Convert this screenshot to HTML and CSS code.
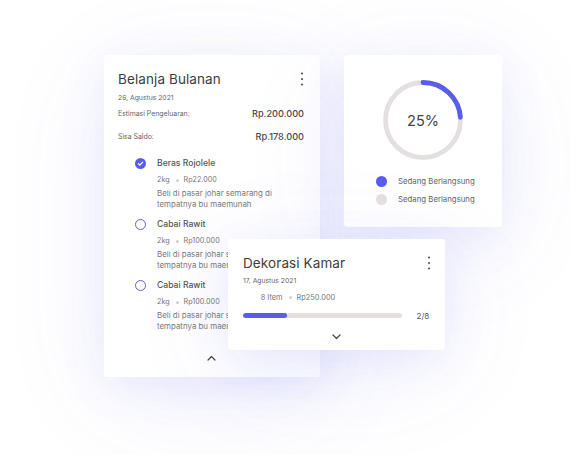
FILE: index.html
```html
<!DOCTYPE html>
<html lang="id">
<head>
<meta charset="utf-8">
<title>Belanja</title>
<link rel="stylesheet" href="styles.css">
</head>
<body>
<div class="stage">
  <section class="card list-card">
    <div class="card-head">
      <h2>Belanja Bulanan</h2>
      <svg class="kebab" width="4" height="14" viewBox="0 0 4 14"><circle cx="2" cy="1.5" r="1.1"/><circle cx="2" cy="7" r="1.1"/><circle cx="2" cy="12.5" r="1.1"/></svg>
    </div>
    <div class="date">26, Agustus 2021</div>
    <div class="sum-row first"><span class="sum-label">Estimasi Pengeluaran:</span><span class="sum-val">Rp.200.000</span></div>
    <div class="sum-row second"><span class="sum-label">Sisa Saldo:</span><span class="sum-val">Rp.178.000</span></div>
    <ul class="items">
      <li class="item">
        <span class="check done"><svg width="11" height="11" viewBox="0 0 11 11"><circle cx="5.5" cy="5.5" r="5.5"/><path d="M3.3 5.6l1.5 1.5 2.9-3" /></svg></span>
        <div class="item-body">
          <div class="item-name">Beras Rojolele</div>
          <div class="meta">2kg <i class="dot"></i> Rp22.000</div>
          <p class="desc">Beli di pasar johar semarang di<br>tempatnya bu maemunah</p>
        </div>
      </li>
      <li class="item">
        <span class="check"></span>
        <div class="item-body">
          <div class="item-name">Cabai Rawit</div>
          <div class="meta">2kg <i class="dot"></i> Rp100.000</div>
          <p class="desc">Beli di pasar johar semarang di<br>tempatnya bu maemunah</p>
        </div>
      </li>
      <li class="item">
        <span class="check"></span>
        <div class="item-body">
          <div class="item-name">Cabai Rawit</div>
          <div class="meta">2kg <i class="dot"></i> Rp100.000</div>
          <p class="desc">Beli di pasar johar semarang di<br>tempatnya bu maemunah</p>
        </div>
      </li>
    </ul>
    <svg class="chev" width="9" height="6" viewBox="0 0 9 6"><path d="M1 5l3.5-3.5L8 5"/></svg>
  </section>

  <section class="card chart-card">
    <div class="donut">
      <svg width="80" height="80" viewBox="0 0 80 80">
        <circle class="track" cx="40" cy="40" r="37.5"/>
        <circle class="arc" cx="40" cy="40" r="37.5" transform="rotate(-90 40 40)"/>
      </svg>
      <span class="pct">25%</span>
    </div>
    <ul class="legend">
      <li><i class="ldot blue"></i>Sedang Berlangsung</li>
      <li><i class="ldot grey"></i>Sedang Berlangsung</li>
    </ul>
  </section>

  <section class="card deco-card">
    <div class="card-head">
      <h2>Dekorasi Kamar</h2>
      <svg class="kebab" width="4" height="14" viewBox="0 0 4 14"><circle cx="2" cy="1.5" r="1.1"/><circle cx="2" cy="7" r="1.1"/><circle cx="2" cy="12.5" r="1.1"/></svg>
    </div>
    <div class="date">17, Agustus 2021</div>
    <div class="meta deco-meta">8 Item <i class="dot"></i> Rp250.000</div>
    <div class="progress-row">
      <div class="bar"><div class="fill" style="width:28%"></div></div>
      <span class="count">2/8</span>
    </div>
    <svg class="chev" width="9" height="6" viewBox="0 0 9 6"><path d="M1 1l3.5 3.5L8 1"/></svg>
  </section>
</div>
</body>
</html>
```

FILE: styles.css
```css
* { box-sizing: border-box; }
html, body {
  margin: 0;
  padding: 0;
  background: #ffffff;
  width: 571px;
  height: 454px;
  overflow: hidden;
  font-family: Inter, "Noto Sans", sans-serif;
  color: #444;
}
.stage {
  display: grid;
  grid-template-columns: 124px 92px 24px 101px 57px;
  grid-template-rows: 172px 12px 111px 27px;
  margin: 55px 0 0 104px;
  width: 398px;
}
.card {
  background: #fff;
  border-radius: 3px;
  box-shadow: 0 10px 45px rgba(92, 96, 232, 0.10), 0 20px 110px rgba(100, 104, 235, 0.09);
}
.list-card {
  grid-column: 1 / 3;
  grid-row: 1 / 5;
  display: flex;
  flex-direction: column;
  padding: 14px 16px 16px 14px;
  z-index: 1;
}
.chart-card {
  grid-column: 4 / 6;
  grid-row: 1 / 2;
  padding-top: 25px;
  z-index: 1;
}
.deco-card {
  grid-column: 2 / 5;
  grid-row: 3 / 4;
  display: flex;
  flex-direction: column;
  padding: 14px 15px 10px 15px;
  z-index: 2;
}
.card-head {
  display: flex;
  align-items: center;
  justify-content: space-between;
  height: 20px;
}
.card-head h2 {
  margin: 0;
  font-size: 13.5px;
  line-height: 20px;
  font-weight: 400;
  color: #3d3d3d;
  letter-spacing: 0.1px;
}
.kebab { fill: #555; margin-right: -1px; }
.list-card .kebab { margin-right: 0; }
.date {
  margin-top: 4px;
  font-size: 6.8px;
  line-height: 10px;
  color: #666;
}
.deco-card .date { margin-top: 3px; }
.sum-row {
  display: flex;
  align-items: center;
  height: 12px;
}
.sum-row.first { margin-top: 4px; }
.sum-row.second { margin-top: 11px; }
.sum-label {
  width: 139px;
  font-size: 6.9px;
  color: #666;
}
.sum-val {
  font-size: 9.2px;
  font-weight: 500;
  color: #4a4a4a;
}
.items {
  list-style: none;
  margin: 15px 0 0 0;
  padding: 0 0 0 17px;
  display: flex;
  flex-direction: column;
  gap: 9px;
}
.item {
  display: flex;
  align-items: flex-start;
}
.check {
  width: 11px;
  height: 11px;
  margin-top: 0.5px;
  margin-right: 11px;
  border: 1.4px solid #5a5de8;
  border-radius: 50%;
  flex: none;
}
.check.done { border: none; }
.check.done svg { display: block; }
.check.done circle { fill: #5a5de8; }
.check.done path { fill: none; stroke: #fff; stroke-width: 1.3; stroke-linecap: round; stroke-linejoin: round; }
.item-name {
  font-size: 8.6px;
  line-height: 12px;
  font-weight: 500;
  color: #555;
}
.meta {
  display: flex;
  align-items: center;
  margin-top: 6px;
  font-size: 7.2px;
  line-height: 10px;
  color: #777;
}
.dot {
  display: inline-block;
  width: 3px;
  height: 3px;
  border-radius: 50%;
  background: #cfcfcf;
  margin: 0 5px 0 6px;
}
.desc {
  margin: 3px 0 0 0;
  font-size: 7.9px;
  line-height: 10.5px;
  color: #7a7a7a;
  white-space: nowrap;
}
.chev {
  margin: auto auto 0 auto;
  fill: none;
  stroke: #444;
  stroke-width: 1.2;
  stroke-linecap: round;
  stroke-linejoin: round;
}
.deco-meta {
  margin-top: 6.7px;
  padding-left: 17.7px;
  font-size: 7.4px;
}
.progress-row {
  display: flex;
  align-items: center;
  margin-top: 8.3px;
  height: 10px;
}
.bar {
  width: 158.5px;
  height: 5px;
  border-radius: 3px;
  background: #e4e0e0;
  overflow: hidden;
}
.fill {
  height: 100%;
  border-radius: 3px;
  background: #5a5de8;
}
.count {
  margin-left: 15px;
  font-size: 8px;
  color: #555;
}
.donut {
  display: grid;
  place-items: center;
  width: 80px;
  height: 80px;
  margin: 0 auto;
}
.donut svg, .donut .pct { grid-area: 1 / 1; }
.track { fill: none; stroke: #e4e0e0; stroke-width: 4.8; }
.arc {
  fill: none;
  stroke: #5a5de8;
  stroke-width: 4.8;
  stroke-linecap: round;
  stroke-dasharray: 56 200;
}
.pct {
  font-size: 14.5px;
  color: #444;
}
.legend {
  list-style: none;
  margin: 15px 0 0 0;
  padding: 0 0 0 32px;
  display: flex;
  flex-direction: column;
  gap: 6px;
}
.legend li {
  display: flex;
  align-items: center;
  height: 12px;
  font-size: 7.8px;
  color: #666;
}
.ldot {
  width: 11px;
  height: 11px;
  border-radius: 50%;
  margin-right: 11px;
}
.ldot.blue { background: #5a5de8; }
.ldot.grey { background: #e4e0e0; }
```
